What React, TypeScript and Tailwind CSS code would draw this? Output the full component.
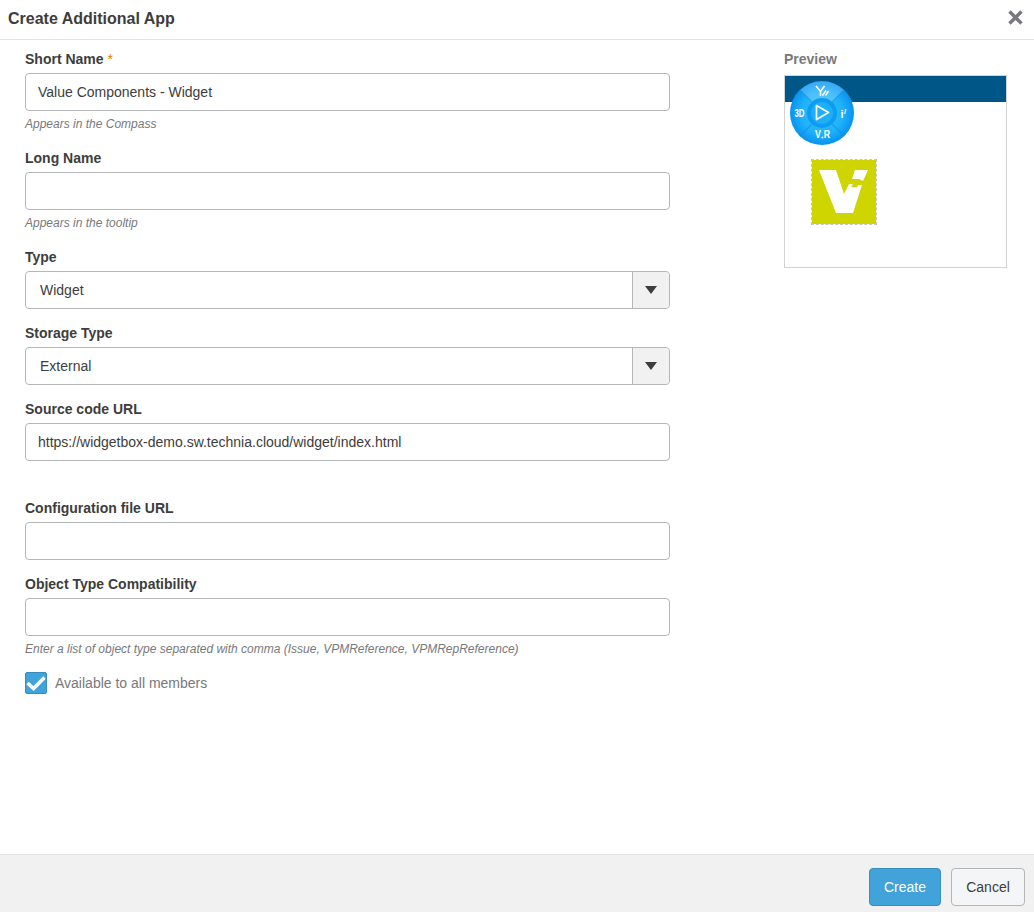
const labelClass = "block h-5 mb-1 text-sm leading-5 font-bold text-[#3d3d3d]";
const inputClass = "block w-full h-[38px] px-3 text-sm leading-[36px] text-[#3d3d3d] bg-white border border-[#b4b6ba] rounded";

const Field = ({ label, value, help, required, noHelp }: { label: string; value?: string; help?: string; required?: boolean; noHelp?: boolean }) => (
  <div>
    <label className={labelClass}>
      {label}
      {required && <span className="text-[#e87b00] font-normal"> *</span>}
    </label>
    <div className={inputClass}>{value}</div>
    {noHelp ? (
      <div className="h-[14px]"></div>
    ) : (
      <p className="mt-1 h-[18px] mb-[15px] text-xs leading-[18px] italic text-[#77797c]">{help}</p>
    )}
  </div>
);

const SelectField = ({ label, value }: { label: string; value: string }) => (
  <div className="mb-[14px]">
    <label className={labelClass}>{label}</label>
    <div className="flex h-[38px] text-sm text-[#3d3d3d] bg-white border border-[#b4b6ba] rounded">
      <div className="flex-1 pl-[14px] leading-[36px]">{value}</div>
      <div className="w-[37px] flex items-center justify-center bg-[#f1f1f1] border-l border-[#b4b6ba] rounded-r">
        <svg width="12" height="8" viewBox="0 0 12 8">
          <path d="M0 0H12L6 8Z" fill="#3d3d3d" />
        </svg>
      </div>
    </div>
  </div>
);

const CompassIcon = () => (
  <svg className="absolute left-[5px] top-[5px]" width="64" height="64" viewBox="0 0 64 64">
    <defs>
      <radialGradient id="compassBg" cx="50%" cy="50%" r="50%">
        <stop offset="0%" stopColor="#30c6fa" />
        <stop offset="65%" stopColor="#1fb2f8" />
        <stop offset="100%" stopColor="#0792f2" />
      </radialGradient>
    </defs>
    <circle cx="32" cy="32" r="32" fill="url(#compassBg)" />
    <path d="M10 9A32 32 0 0 1 54 9L41 22A15 15 0 0 0 23 22Z" fill="#ffffff" fillOpacity="0.2" />
    <path d="M10 9L22 21M54 9L42 21M10 55L22 43M54 55L42 43" stroke="#0d86d8" strokeOpacity="0.45" strokeWidth="1.2" />
    <circle cx="32" cy="32" r="15" fill="#0d9cf0" />
    <circle cx="32" cy="32" r="11" fill="#1cb0f8" />
    <path d="M26.5 24.5L38.5 31.5L26.5 38.5Z" fill="none" stroke="#ffffff" strokeWidth="1.7" strokeLinejoin="round" />
    <g fill="#ffffff" fontFamily="'Liberation Sans', Arial, sans-serif" fontWeight="700" fontSize="11">
      <text x="4.5" y="36" textLength="10" lengthAdjust="spacingAndGlyphs">3D</text>
      <text x="25" y="56.5" textLength="15" lengthAdjust="spacingAndGlyphs">V<tspan fontSize="6" dy="1.5">+</tspan><tspan dy="-1.5">R</tspan></text>
      <text x="50.5" y="36.5">i</text>
      <text x="54" y="33" fontSize="8">/</text>
    </g>
    <path d="M26 5L30.5 10.5V15M34.5 5L30.5 10.5M32.5 14.5L36 9.5M35.5 14.5L38.5 10" stroke="#ffffff" strokeWidth="1.5" fill="none" />
  </svg>
);

const VLogo = () => (
  <div className="absolute left-[26px] top-[83px] w-[66px] h-[66px] bg-[#ced500] bg-clip-padding border border-dashed border-[#c4c4c4]">
    <svg width="64" height="64" viewBox="1 1 64 64">
      <path d="M8 11H25L33 35L38 25L42 25L40 28L46 28L47 26H51L42 54H25Z" fill="#ffffff" />
      <path d="M44 11H57L52 22L48 20H41Z" fill="#ffffff" />
    </svg>
  </div>
);

export default function App() {
  return (
    <div className="h-[912px] flex flex-col bg-white font-['Liberation_Sans',Arial,sans-serif]">
      <header className="h-10 shrink-0 flex items-center justify-between pl-2 pr-[11px] border-b border-[#e2e4e3]">
        <h1 className="mb-[2px] text-base font-bold text-[#3d3d3d]">Create Additional App</h1>
        <svg className="mb-[4px]" width="15" height="15" viewBox="0 0 15 15">
          <path d="M1.5 1.5L13.5 13.5M13.5 1.5L1.5 13.5" stroke="#77797c" strokeWidth="3.4" />
        </svg>
      </header>

      <main className="flex-1 flex pl-[25px] pt-[9px]">
        <form className="w-[645px]">
          <Field label="Short Name" required value="Value Components - Widget" help="Appears in the Compass" />
          <Field label="Long Name" help="Appears in the tooltip" />
          <SelectField label="Type" value="Widget" />
          <SelectField label="Storage Type" value="External" />
          <Field label="Source code URL" value="https://widgetbox-demo.sw.technia.cloud/widget/index.html" help="" />
          <Field label="Configuration file URL" noHelp />
          <Field
            label="Object Type Compatibility"
            help="Enter a list of object type separated with comma (Issue, VPMReference, VPMRepReference)"
          />
          <div className="flex items-center gap-2 -mt-[1px]">
            <span className="w-[22px] h-[22px] flex items-center justify-center bg-[#42a2da] border border-[#368ebf] rounded-[2px]">
              <svg width="20" height="20" viewBox="0 0 20 20">
                <path d="M1.5 10L7.5 15.5L18.5 4.5" fill="none" stroke="#ffffff" strokeWidth="3.6" />
              </svg>
            </span>
            <span className="text-sm text-[#77797c]">Available to all members</span>
          </div>
        </form>

        <aside className="ml-[114px] w-[223px]">
          <div className="h-5 mb-[6px] text-sm leading-5 font-bold text-[#77797c]">Preview</div>
          <div className="relative h-[193px] border border-[#d1d4d4] bg-white">
            <div className="h-[26px] bg-[#005686]"></div>
            <CompassIcon />
            <VLogo />
          </div>
        </aside>
      </main>

      <footer className="h-[58px] shrink-0 flex items-start justify-end gap-[10px] pt-[13px] pr-[9px] bg-[#f1f1f1] border-t border-[#e2e4e3]">
        <button className="w-[72px] h-[38px] text-sm text-white bg-[#42a2da] border border-[#368ebf] rounded">Create</button>
        <button className="w-[74px] h-[38px] text-sm text-[#3d3d3d] bg-[#f4f5f6] border border-[#b4b6ba] rounded">Cancel</button>
      </footer>
    </div>
  );
}
